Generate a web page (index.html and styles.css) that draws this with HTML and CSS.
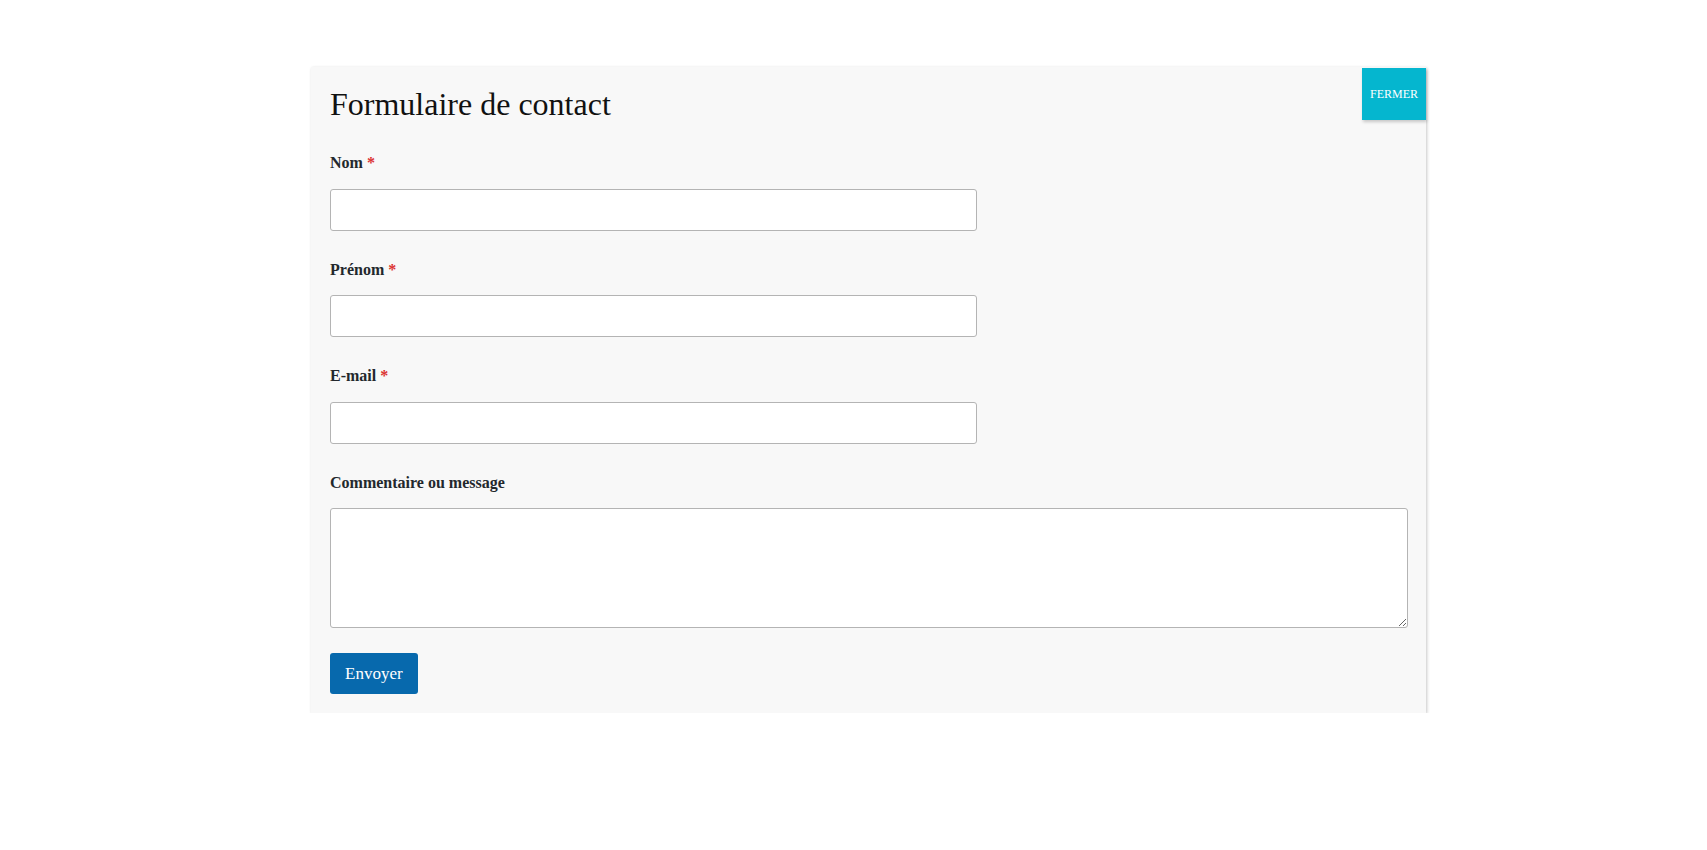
FILE: index.html
```html
<!DOCTYPE html>
<html lang="fr">
<head>
<meta charset="utf-8">
<title>Formulaire de contact</title>
<link rel="stylesheet" href="styles.css">
</head>
<body>
<div class="panel">
  <button class="close" type="button">FERMER</button>
  <h1 class="title">Formulaire de contact</h1>
  <form class="form">
    <div class="field">
      <label class="label">Nom <span class="req">*</span></label>
      <input class="input" type="text">
    </div>
    <div class="field">
      <label class="label">Prénom <span class="req">*</span></label>
      <input class="input" type="text">
    </div>
    <div class="field">
      <label class="label">E-mail <span class="req">*</span></label>
      <input class="input" type="email">
    </div>
    <div class="field field-last">
      <label class="label">Commentaire ou message</label>
      <textarea class="textarea"></textarea>
    </div>
    <button class="submit" type="button">Envoyer</button>
  </form>
</div>
</body>
</html>
```

FILE: styles.css
```css
html, body {
  margin: 0;
  padding: 0;
  background: #ffffff;
  font-family: "Liberation Serif", "Times New Roman", serif;
}

.panel {
  position: relative;
  box-sizing: border-box;
  width: 1115px;
  margin: 67px 0 0 311px;
  padding: 19px 18px 19px 19px;
  background: #f8f8f8;
  box-shadow: 1px 1px 3px rgba(0, 0, 0, 0.22);
}

.close {
  position: absolute;
  top: 1px;
  right: 0;
  width: 64px;
  height: 52px;
  padding: 0;
  border: 0;
  background: #05b6cf;
  color: #ffffff;
  font-family: "Liberation Serif", "Times New Roman", serif;
  font-size: 12px;
  box-shadow: 1px 2px 3px rgba(0, 0, 0, 0.2);
  cursor: pointer;
}

.title {
  margin: 0;
  font-size: 32px;
  font-weight: normal;
  color: #111111;
}

.form {
  display: flex;
  flex-direction: column;
  align-items: flex-start;
  margin-top: 31px;
}

.field {
  display: flex;
  flex-direction: column;
  width: 100%;
  margin-bottom: 30px;
}

.field-last {
  margin-bottom: 25px;
}

.label {
  display: block;
  font-size: 16px;
  font-weight: bold;
  color: #23282d;
  margin-bottom: 16.6px;
}

.req {
  color: #dc3232;
}

.input {
  box-sizing: border-box;
  width: 60%;
  height: 42px;
  margin: 0;
  background: #ffffff;
  border: 1px solid #b4b4b4;
  border-radius: 3px;
  font-size: 16px;
}

.textarea {
  box-sizing: border-box;
  width: 100%;
  height: 120px;
  margin: 0;
  background: #ffffff;
  border: 1px solid #b4b4b4;
  border-radius: 3px;
  font-size: 16px;
  font-family: inherit;
}

.submit {
  box-sizing: border-box;
  height: 41px;
  padding: 0 15px;
  border: 0;
  border-radius: 3px;
  background: #0769ad;
  color: #ffffff;
  font-family: "Liberation Serif", "Times New Roman", serif;
  font-size: 17px;
  cursor: pointer;
}
```
